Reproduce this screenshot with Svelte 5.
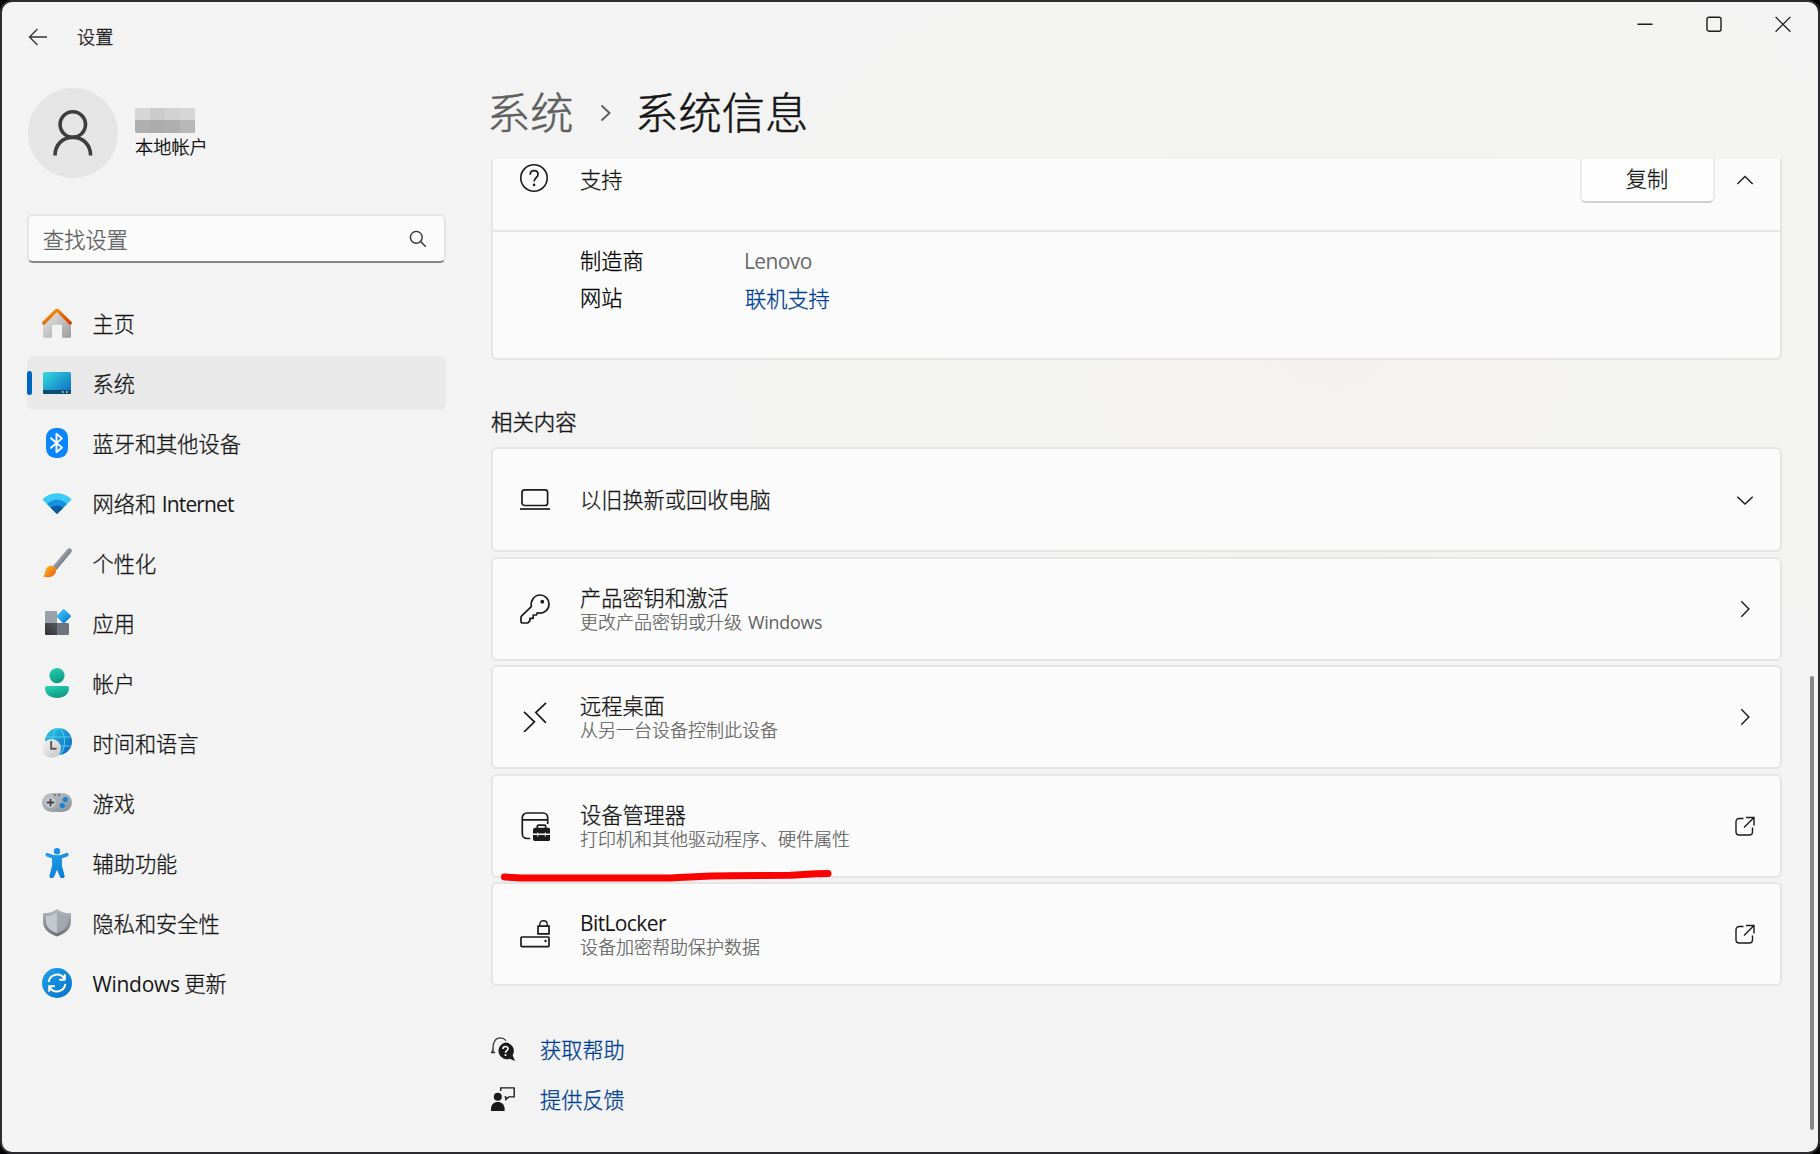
<script>
  const nav = [
    { id: 'home', label: '主页' },
    { id: 'system', label: '系统' },
    { id: 'bluetooth', label: '蓝牙和其他设备' },
    { id: 'network', label: '网络和', latin: 'Internet' },
    { id: 'brush', label: '个性化' },
    { id: 'apps', label: '应用' },
    { id: 'account', label: '帐户' },
    { id: 'time', label: '时间和语言' },
    { id: 'game', label: '游戏' },
    { id: 'access', label: '辅助功能' },
    { id: 'shield', label: '隐私和安全性' },
    { id: 'update', label: '更新', pre: 'Windows' }
  ];
  const cards = [
    { id: 'laptop', title: '以旧换新或回收电脑', end: 'down' },
    { id: 'key', title: '产品密钥和激活', sub: '更改产品密钥或升级', latin: 'Windows', end: 'right' },
    { id: 'remote', title: '远程桌面', sub: '从另一台设备控制此设备', end: 'right' },
    { id: 'device', title: '设备管理器', sub: '打印机和其他驱动程序、硬件属性', end: 'open' },
    { id: 'lock', latinTitle: 'BitLocker', sub: '设备加密帮助保护数据', end: 'open' }
  ];
</script>

{#snippet navIcon(id)}
  <svg class="nav-icon" width="30" height="30" viewBox="0 0 30 30" fill="none">
    {#if id === 'home'}
      <path d="M1 14 15 2l14 12v14.5a1.2 1.2 0 0 1-1.2 1.2h-6.6a1.2 1.2 0 0 1-1.2-1.2V17.8a1 1 0 0 0-1-1h-8a1 1 0 0 0-1 1v10.7a1.2 1.2 0 0 1-1.2 1.2H2.2A1.2 1.2 0 0 1 1 28.500z" fill="url(#g-home)" />
      <path d="M1.800 15 13.600 3.100a2 2 0 0 1 2.800 0L28.200 15" stroke="url(#g-roof)" stroke-width="3.300" stroke-linecap="round" />
    {:else if id === 'system'}
      <rect x="1" y="4" width="28" height="22" rx="1.600" fill="url(#g-sys)" />
      <path d="M1 22h28v2.400a1.600 1.600 0 0 1-1.600 1.600H2.600A1.600 1.600 0 0 1 1 24.400z" fill="#0c4a6e" />
      <path d="M20 23.200h1.600v1.600H20zM24 23.200h1.600v1.600H24z" fill="#d5e6ee" />
    {:else if id === 'bluetooth'}
      <rect x="4" y="0" width="22" height="30" rx="9.500" fill="#0a84ff" />
      <path d="M9 10.200 20 19.600l-5.500 4.600V5.800l5.500 4.600L9 19.800" stroke="#fff" stroke-width="1.900" stroke-linejoin="round" stroke-linecap="round" />
    {:else if id === 'network'}
      <path d="M15 26 .4 11.600C8 3.200 22 3.200 29.600 11.600z" fill="#3ccbf4" />
      <path d="M15 26 5 16c5.600-5.700 14.400-5.700 20 0z" fill="#1592dd" />
      <path d="M15 26 8.800 19.800c3.500-3.200 8.900-3.200 12.400 0z" fill="#0c59a4" />
    {:else if id === 'brush'}
      <path d="M10.800 18.200 25.200 1.300c1.300-1.500 3-1.500 4-.3.900 1 .8 2.500-.2 3.800L14.500 22z" fill="url(#g-handle)" />
      <path d="M.8 28.300c2.700-1.700 2-3.600 3-6.800 1-3.200 4-4.600 6.900-3.500 3.300 1.300 4.300 4.700 2.400 7.700-2.500 3.900-8.200 4.300-12.300 2.600z" fill="url(#g-tip)" />
    {:else if id === 'apps'}
      <path d="M3 4.200A1.200 1.200 0 0 1 4.200 3H15v12H3z" fill="#98a0aa" />
      <path d="M3 15h12v12H4.200A1.200 1.200 0 0 1 3 25.800z" fill="url(#g-dark)" />
      <path d="M15 15h10.800a1.200 1.200 0 0 1 1.200 1.200v9.600a1.200 1.200 0 0 1-1.200 1.200H15z" fill="#6e747d" />
      <path d="m20.900 1.400-6 6a1.200 1.200 0 0 0 0 1.700l6 6a1.200 1.200 0 0 0 1.700 0l6-6a1.200 1.200 0 0 0 0-1.700l-6-6a1.200 1.200 0 0 0-1.700 0z" fill="url(#g-blue)" />
    {:else if id === 'account'}
      <circle cx="15" cy="7.600" r="7.600" fill="url(#g-green)" />
      <path d="M5 18h20a2 2 0 0 1 2 2c0 6.400-5.400 10-12 10S3 26.400 3 20a2 2 0 0 1 2-2z" fill="url(#g-green)" />
    {:else if id === 'time'}
      <circle cx="16.500" cy="13.500" r="13.500" fill="url(#g-globe)" />
      <g stroke="#5adcf4" stroke-width="1.100" opacity=".8">
        <ellipse cx="16.500" cy="13.500" rx="6" ry="13" />
        <path d="M4.500 9h24M4.500 18h24" />
      </g>
      <circle cx="9.600" cy="20.500" r="9.500" fill="url(#g-clock)" />
      <path d="M9.200 13v7.800h5.400" stroke="#555" stroke-width="1.900" />
    {:else if id === 'game'}
      <rect x="0" y="5" width="30" height="19" rx="9.500" fill="url(#g-pad)" />
      <circle cx="8.500" cy="14.500" r="5.200" fill="#c5cbd0" />
      <path d="M8.500 10.800v7.400M4.800 14.500h7.400" stroke="#444" stroke-width="1.800" />
      <circle cx="23.300" cy="11.500" r="2.600" fill="#1583d7" />
      <circle cx="20.300" cy="17.500" r="2.600" fill="#1583d7" />
      <path d="M12 6.200h1.600v1.600H12zM16.400 6.200H18v1.600h-1.600z" fill="#4c4c4c" />
    {:else if id === 'access'}
      <circle cx="15" cy="3.200" r="3.200" fill="#1a8fe3" />
      <path d="M5.200 6.700 11.500 9h7l6.300-2.300" stroke="url(#g-body)" stroke-width="3.600" stroke-linecap="round" />
      <path d="M10.600 8h8.800v9.600L22 27.300a1.900 1.900 0 0 1-3.600 1.500L15 20.500l-3.400 8.300A1.900 1.900 0 0 1 8 27.300l2.600-9.700z" fill="url(#g-body)" stroke="url(#g-body)" />
    {:else if id === 'shield'}
      <path d="M15 1c3.400 2.800 8 4.200 14 4.300v8.200c0 7-5 11.700-14 15-9-3.300-14-8-14-15V5.300C7 5.200 11.600 3.800 15 1z" fill="url(#g-sh1)" />
      <path d="M15 4.500v20.800C8 22.500 4 18.800 4 13.500V8c4.300-.2 8-1.400 11-3.500z" fill="#c3c8cd" />
      <path d="M15 4.500v20.800c7-2.800 11-6.500 11-11.800V8c-4.300-.2-8-1.400-11-3.500z" fill="#a2a8ae" />
    {:else}
      <circle cx="15" cy="15" r="15" fill="url(#g-upd)" />
      <path d="M6.800 13.300A8.500 8.500 0 0 1 22 10.200M22.800 7v4.800h-4.900M23.200 16.700A8.500 8.500 0 0 1 8 19.800M7.200 23v-4.800h4.900" stroke="#fff" stroke-width="2" stroke-linecap="round" stroke-linejoin="round" />
    {/if}
  </svg>
{/snippet}

{#snippet cardIcon(id)}
  <svg class="card-icon" width="30" height="30" viewBox="0 0 30 30" fill="none" stroke="#1b1b1b" stroke-width="1.700">
    {#if id === 'laptop'}
      <rect x="2" y="4.900" width="25.600" height="15.600" rx="2.600" />
      <path d="M0 24h30" />
    {:else if id === 'key'}
      <path d="M20 1a9 9 0 0 1 9 9c0 5.500-4.300 9.300-9.300 9.100-1 0-1.600-.1-2.400-.3l-.9 2.200h-3.200v3.300H9.900v2.500c0 .5-.4.800-.9.800L7.800 29H2.300C1.500 29 1 28.500 1 27.800v-4.200c0-.7.200-1.200.7-1.700l9.600-9.200C10.300 6.500 14.500 1 20 1z" stroke-linejoin="round" />
      <circle cx="22.300" cy="7.700" r="1.900" fill="#1b1b1b" stroke="none" />
    {:else if id === 'remote'}
      <path d="M26 .8 15.800 10.600 26 20.800M4 9.800l10.400 10L4 30" />
    {:else if id === 'device'}
      <path d="M2 8.800h26M10.200 27.500H7A4.700 4.700 0 0 1 2.300 22.800V6.700A4.700 4.700 0 0 1 7 2h16a4.700 4.700 0 0 1 4.700 4.700V13" />
      <path d="M17.300 17v-1.500c0-.7.600-1.300 1.300-1.300h5.800c.7 0 1.300.6 1.300 1.300V17" />
      <path d="M15 16.800h13a2.200 2.200 0 0 1 2.200 2.200v3.500H13V19a2.200 2.200 0 0 1 2-2.200zM13 24h17.200v4.200a1.800 1.800 0 0 1-1.800 1.800H14.800A1.800 1.800 0 0 1 13 28.200z" fill="#1b1b1b" stroke="none" />
      <path d="M17.800 21.500v4M25.300 21.500v4" stroke="#fbfbfb" stroke-width="1" />
    {:else}
      <rect x="1" y="18" width="28" height="9.600" rx=".8" />
      <path d="M18 7.200h11v7.600H18z" />
      <path d="M19.800 7V5.300c0-4.700 7.400-4.700 7.400 0V7" stroke-width="1.400" />
      <circle cx="25.500" cy="22" r="1.200" fill="#1b1b1b" stroke="none" />
    {/if}
  </svg>
{/snippet}

{#snippet endIcon(kind)}
  <svg class="end-icon" width="22" height="22" viewBox="0 0 22 22" fill="none" stroke="#1b1b1b" stroke-width="1.400">
    {#if kind === 'up'}
      <path d="m3.300 14.900 7.700-7.400 7.700 7.400" />
    {:else if kind === 'down'}
      <path d="m3.300 7.700 7.700 7.400 7.700-7.400" />
    {:else if kind === 'right'}
      <path d="m7.300 3.300 7.600 7.700-7.600 7.700" />
    {:else}
      <path d="M9.500 3.500H5.200A3.200 3.200 0 0 0 2 6.700v10.100A3.200 3.200 0 0 0 5.200 20h10.100a3.200 3.200 0 0 0 3.200-3.200v-4.200M12 2.500h8v8M20 2.500l-10 10" />
    {/if}
  </svg>
{/snippet}

<div class="window">
  <svg class="defs" width="0" height="0" aria-hidden="true">
    <defs>
      <linearGradient id="g-home" x1="0" y1="0" x2="1" y2="1"><stop offset=".2" stop-color="#dedede" /><stop offset="1" stop-color="#9b9b9b" /></linearGradient>
      <linearGradient id="g-roof" x1="0" y1="0" x2="1" y2="1"><stop offset="0" stop-color="#f5a10a" /><stop offset="1" stop-color="#d83b01" /></linearGradient>
      <linearGradient id="g-sys" x1="0" y1="0" x2="1" y2="1"><stop offset="0" stop-color="#36dbe0" /><stop offset="1" stop-color="#0a68c0" /></linearGradient>
      <linearGradient id="g-handle" x1="0" y1="0" x2="1" y2="1"><stop offset=".3" stop-color="#a9b0b7" /><stop offset=".7" stop-color="#6b7178" /></linearGradient>
      <linearGradient id="g-tip" x1="0" y1="0" x2="1" y2="1"><stop offset=".1" stop-color="#ffb821" /><stop offset="1" stop-color="#ea5a0c" /></linearGradient>
      <linearGradient id="g-dark" x1="0" y1="1" x2="1" y2="0"><stop offset="0" stop-color="#303234" /><stop offset="1" stop-color="#55595d" /></linearGradient>
      <linearGradient id="g-blue" x1="0" y1="0" x2="1" y2="1"><stop offset=".2" stop-color="#3cc4f6" /><stop offset=".9" stop-color="#0873d3" /></linearGradient>
      <linearGradient id="g-green" x1="0" y1="0" x2=".4" y2="1"><stop offset="0" stop-color="#27d3b4" /><stop offset="1" stop-color="#0f9a84" /></linearGradient>
      <linearGradient id="g-globe" x1="0" y1="0" x2="1" y2="1"><stop offset="0" stop-color="#2fcbe2" /><stop offset="1" stop-color="#0a60bf" /></linearGradient>
      <linearGradient id="g-clock" x1="0" y1="0" x2="1" y2="1"><stop offset="0" stop-color="#f5f5f5" /><stop offset="1" stop-color="#c4c4c4" /></linearGradient>
      <linearGradient id="g-pad" x1="0" y1="0" x2="1" y2="1"><stop offset="0" stop-color="#c3c9ce" /><stop offset="1" stop-color="#868d94" /></linearGradient>
      <linearGradient id="g-body" gradientUnits="userSpaceOnUse" x1="5" y1="4" x2="22" y2="30"><stop offset="0" stop-color="#22a6ec" /><stop offset="1" stop-color="#0b78d4" /></linearGradient>
      <linearGradient id="g-sh1" x1="0" y1="0" x2="0" y2="1"><stop offset="0" stop-color="#b4babf" /><stop offset="1" stop-color="#6b7076" /></linearGradient>
      <linearGradient id="g-upd" x1="0" y1="0" x2="1" y2="1"><stop offset="0" stop-color="#1fa2ea" /><stop offset="1" stop-color="#0670c8" /></linearGradient>
    </defs>
  </svg>

  <header class="titlebar">
    <div class="app-title">
      <svg width="20" height="20" viewBox="0 0 20 20" fill="none" stroke="#333" stroke-width="1.300">
        <path d="M19 10H1.600M9.500 2 1.500 10l8 8" />
      </svg>
      <span>设置</span>
    </div>
    <div class="controls">
      <span class="ctl"><svg width="16" height="16" viewBox="0 0 16 16" fill="none" stroke="#1b1b1b" stroke-width="1.400"><path d="M.5 8.300h15" /></svg></span>
      <span class="ctl"><svg width="16" height="16" viewBox="0 0 16 16" fill="none" stroke="#1b1b1b" stroke-width="1.400"><rect x="1" y="1.200" width="14" height="14" rx="2" /></svg></span>
      <span class="ctl"><svg width="16" height="16" viewBox="0 0 16 16" fill="none" stroke="#1b1b1b" stroke-width="1.300"><path d="m.6.900 14.800 14.800M15.400.900.600 15.700" /></svg></span>
    </div>
  </header>

  <div class="body">
    <aside class="sidebar">
      <div class="profile">
        <div class="avatar">
          <svg width="42" height="48" viewBox="0 0 42 48" fill="none" stroke="#3d3d3d" stroke-width="3.600">
            <circle cx="20.800" cy="15.500" r="12.700" />
            <path d="M3 46.500c0-10.800 7.700-18.100 17.800-18.100s17.800 7.300 17.800 18.100" />
          </svg>
        </div>
        <div class="who">
          <div class="mosaic"><i></i><i></i><i></i><i></i><i></i><i></i><i></i><i></i></div>
          <span>本地帐户</span>
        </div>
      </div>
      <div class="search">
        <span>查找设置</span>
        <svg width="18" height="18" viewBox="0 0 18 18" fill="none" stroke="#333" stroke-width="1.400"><circle cx="7.300" cy="7.300" r="5.900" /><path d="m11.600 11.600 5.200 5.200" /></svg>
      </div>
      <nav>
        {#each nav as item}
          <div class="nav-item" class:active={item.id === 'system'}>
            {@render navIcon(item.id)}
            <span class="nav-label">{#if item.pre}<span class="en wide">{item.pre}</span>&nbsp;{/if}{item.label}{#if item.latin}&nbsp;<span class="en tight">{item.latin}</span>{/if}</span>
          </div>
        {/each}
      </nav>
    </aside>

    <main>
      <h1>
        <span class="parent">系统</span>
        <svg width="12" height="18" viewBox="0 0 12 18" fill="none" stroke="#5c5c5c" stroke-width="1.900"><path d="m1.500 1.500 8 7.500-8 7.500" /></svg>
        <span>系统信息</span>
      </h1>

      <div class="scroll">
        <section class="support">
          <div class="support-head">
            <svg class="help" width="30" height="30" viewBox="0 0 30 30" fill="none" stroke="#1b1b1b" stroke-width="1.600">
              <circle cx="15" cy="15" r="13.200" />
              <path d="M11.200 11.700c0-2.400 1.600-4 3.900-4s3.900 1.500 3.900 3.700c0 3.100-3.900 3.500-3.900 7.200" stroke-width="1.700" />
              <circle cx="15.100" cy="21.900" r="1.300" fill="#1b1b1b" stroke="none" />
            </svg>
            <span class="grow">支持</span>
            <button>复制</button>
            {@render endIcon('up')}
          </div>
          <dl>
            <dt>制造商</dt>
            <dd><span class="en">Lenovo</span></dd>
            <dt>网站</dt>
            <dd class="link">联机支持</dd>
          </dl>
        </section>

        <h2>相关内容</h2>
        <div class="cards">
          {#each cards as card}
            <div class="card" class:first={card.id === 'laptop'}>
              {@render cardIcon(card.id)}
              <div class="text">
                <div class="title">{#if card.latinTitle}<span class="en">{card.latinTitle}</span>{:else}{card.title}{/if}</div>
                {#if card.sub}
                  <div class="sub">{card.sub}{#if card.latin}&nbsp;<span class="en wide">{card.latin}</span>{/if}</div>
                {/if}
              </div>
              {@render endIcon(card.end)}
              {#if card.id === 'device'}
                <svg class="marker" width="340" height="20" viewBox="0 0 340 20" fill="none" stroke="#fe0000" stroke-width="7" stroke-linecap="round" stroke-linejoin="round">
                  <path d="M4.500 12c8 .2 12 1 24 1h142c20-.6 30-2.200 60-2.200l60-.6c14-.6 20-1.600 37.500-1.600" />
                </svg>
              {/if}
            </div>
          {/each}
        </div>

        <div class="links">
          <div class="foot">
            <svg width="24" height="24" viewBox="0 0 24 24" fill="none">
              <path d="M2 15.200C1.700 12 2 10 2.300 7.600 3.300 3.300 6 .9 9.200.9c2.400 0 4.400 1 5.900 2.700M0 15.500h4.200M2.600 11.500.7 15.500" stroke="#333" stroke-width="1.300" />
              <path d="M14.500 5.600a8.300 8.300 0 0 1 7.100 12.600L24 24l-5.300-2.200A8.400 8.400 0 1 1 14.500 5.600z" fill="#1b1b1b" />
              <path d="M12 11.900c0-3.200 5-3.100 5-.2 0 1.900-2.500 1.800-2.500 4" stroke="#fff" stroke-width="1.600" />
              <circle cx="14.500" cy="18" r="1.100" fill="#fff" />
            </svg>
            <span>获取帮助</span>
          </div>
          <div class="foot">
            <svg width="24" height="24" viewBox="0 0 24 24" fill="none">
              <path d="M9.700 4V.9h13.500v9h-5.400l-3 2.600V9.900h-1.300" stroke="#1b1b1b" stroke-width="1.400" />
              <circle cx="6.800" cy="9.800" r="4" fill="#1b1b1b" />
              <path d="M0 24v-2.400c0-4 3-6.600 6.800-6.600s6.800 2.600 6.800 6.600V24z" fill="#1b1b1b" />
            </svg>
            <span>提供反馈</span>
          </div>
        </div>
      </div>
    </main>
    <div class="scrollbar"></div>
  </div>
</div>

<style>
  :global(body) {
    background: #000;
  }
  .window {
    box-sizing: border-box;
    height: 1154px;
    border: 2px solid #2c2c2e;
    border-radius: 12px;
    overflow: hidden;
    display: flex;
    flex-direction: column;
    background:
      radial-gradient(ellipse 640px 480px at 1330px 340px, #f4f2ee 0%, #f3f3f0 50%, #f3f3f3 100%);
    color: #161616;
    font-family: 'Noto Sans CJK SC', sans-serif;
    font-weight: 300;
    font-size: 21.200px;
    line-height: 25px;
    -webkit-text-stroke: 0.300px currentColor;
  }
  .defs {
    position: absolute;
  }
  .en {
    font-family: 'Open Sans', 'Noto Sans', sans-serif;
    font-weight: 400;
    font-size: 0.990em;
    letter-spacing: -0.600px;
    line-height: 1;
    -webkit-text-stroke: 0;
  }
  .en.wide {
    letter-spacing: -0.300px;
  }
  .en.tight {
    letter-spacing: -0.850px;
    margin-left: 1px;
  }
  .titlebar {
    display: flex;
    justify-content: space-between;
    height: 72px;
    flex: none;
  }
  .app-title {
    display: flex;
    align-items: center;
    gap: 29px;
    height: 70px;
    padding-left: 26px;
    font-size: 18.200px;
  }
  .app-title span {
    line-height: 24px;
    padding-bottom: 2px;
  }
  .controls {
    display: flex;
    height: 44px;
    margin-right: 1px;
  }
  .ctl {
    width: 69px;
    display: flex;
    align-items: center;
    justify-content: center;
  }
  .body {
    display: flex;
    flex: 1;
    min-height: 0;
  }
  .sidebar {
    width: 419px;
    padding: 14px 0 0 25px;
    flex: none;
  }
  .profile {
    display: flex;
    gap: 17px;
    height: 90px;
    padding-left: 1px;
  }
  .avatar {
    width: 90px;
    height: 90px;
    border-radius: 50%;
    background: #e5e5e5;
    display: flex;
    align-items: center;
    justify-content: center;
  }
  .who {
    padding-top: 20px;
    font-size: 18.200px;
    color: #000;
  }
  .mosaic {
    display: grid;
    grid-template-columns: repeat(4, 15px);
    grid-template-rows: 12px 13px;
    border-radius: 0 2px 4px 2px;
    overflow: hidden;
    margin-bottom: 1px;
  }
  .mosaic i { background: #d6d6d6; }
  .mosaic i:nth-child(2) { background: #cbcbcb; }
  .mosaic i:nth-child(3) { background: #d2d2d2; }
  .mosaic i:nth-child(n + 5) { background: #afafaf; }
  .mosaic i:nth-child(6) { background: #acacac; }
  .mosaic i:nth-child(8) { background: #b8b8b8; }
  .search {
    box-sizing: border-box;
    margin-top: 36px;
    height: 49px;
    border: 2px solid #e5e5e5;
    border-bottom-color: #868686;
    border-radius: 6px;
    background: #fbfbfb;
    display: flex;
    align-items: center;
    justify-content: space-between;
    padding: 0 17px 0 14px;
    color: #5f5f5f;
  }
  .search span {
    padding-bottom: 1px;
  }
  nav {
    display: flex;
    flex-direction: column;
    gap: 6px;
    margin-top: 33px;
  }
  .nav-item {
    height: 54px;
    border-radius: 6px;
    display: flex;
    align-items: center;
    gap: 20.500px;
    padding-left: 15px;
  }
  .nav-item.active {
    background: #e9e9e9;
    padding-left: 0;
  }
  .nav-item.active::before {
    content: '';
    width: 5px;
    height: 24px;
    border-radius: 3px;
    background: #0067c0;
    margin-right: -10.500px;
  }
  .nav-label {
    padding-bottom: 1px;
    white-space: nowrap;
  }
  main {
    width: 1291px;
    margin-left: 45px;
    display: flex;
    flex-direction: column;
    min-height: 0;
    flex: none;
  }
  h1 {
    margin: 0 0 0 -4px;
    height: 85px;
    flex: none;
    box-sizing: border-box;
    padding: 0 0 13px;
    display: flex;
    align-items: center;
    font-size: 43.300px;
    line-height: 60px;
    font-weight: 300;
    -webkit-text-stroke: 0.500px currentColor;
  }
  h1 svg {
    margin: 5px 23.500px 0 26px;
  }
  .parent {
    color: #5f5f5f;
  }
  .scroll {
    flex: 1;
    overflow: hidden;
  }
  .support {
    box-sizing: border-box;
    height: 201px;
    border: 2px solid #e5e5e5;
    border-top: 0;
    border-radius: 0 0 6px 6px;
    background: #fbfbfb;
  }
  .support-head {
    height: 71px;
    border-bottom: 2px solid #e5e5e5;
    display: flex;
    align-items: flex-start;
  }
  .help {
    margin: 4px 31px 0 26px;
  }
  .grow {
    flex: 1;
    padding-top: 7px;
  }
  button {
    width: 135px;
    height: 53px;
    box-sizing: border-box;
    margin: -9px 19px 0 0;
    padding: 2px 0 0;
    border: 2px solid #ebebeb;
    border-bottom-color: #d0d0d0;
    border-radius: 6px;
    background: #fefefe;
    font: inherit;
    color: inherit;
  }
  .support .end-icon {
    margin-top: 10px;
  }
  .end-icon {
    margin-right: 24.500px;
    flex: none;
  }
  dl {
    display: grid;
    grid-template-columns: 165px 1fr;
    row-gap: 12px;
    margin: 0;
    padding: 15px 0 0 87px;
    color: #000;
  }
  dd {
    margin: 0;
    color: #5f5f5f;
  }
  dd .en {
    color: #6a6a6a;
    margin-left: -1px;
  }
  .link {
    color: #003e92;
    padding-top: 1px;
  }
  h2 {
    margin: 49px 0 0;
    height: 38px;
    font-size: 21.400px;
    line-height: 24px;
    font-weight: 300;
    -webkit-text-stroke: 0.450px currentColor;
  }
  .cards {
    display: flex;
    flex-direction: column;
    gap: 4.500px;
  }
  .card {
    position: relative;
    box-sizing: border-box;
    height: 104px;
    border: 2px solid #e5e5e5;
    border-radius: 6px;
    background: #fbfbfb;
    display: flex;
    align-items: center;
  }
  .card.first {
    height: 105px;
  }
  .card-icon {
    margin: 0 30px 0 27px;
    flex: none;
  }
  .text {
    flex: 1;
    padding-top: 4px;
    font-family: 'Liberation Sans', 'Noto Sans CJK SC', sans-serif;
  }
  .first .text {
    padding-top: 2px;
  }
  .sub {
    font-size: 18px;
    color: #5f5f5f;
    -webkit-text-stroke: 0.200px currentColor;
  }
  .sub .en {
    letter-spacing: -0.200px;
    margin-left: 1px;
  }
  .marker {
    position: absolute;
    left: 7px;
    top: 89px;
    z-index: 1;
  }
  .links {
    display: flex;
    flex-direction: column;
    gap: 25px;
    margin-top: 51px;
    color: #003e92;
  }
  .foot {
    display: flex;
    gap: 25px;
    height: 25px;
  }
  .foot span {
    margin-top: -1px;
  }
  .scrollbar {
    width: 4px;
    height: 454px;
    margin: 602px 0 0 28px;
    border-radius: 2px;
    background: #868686;
  }
</style>
